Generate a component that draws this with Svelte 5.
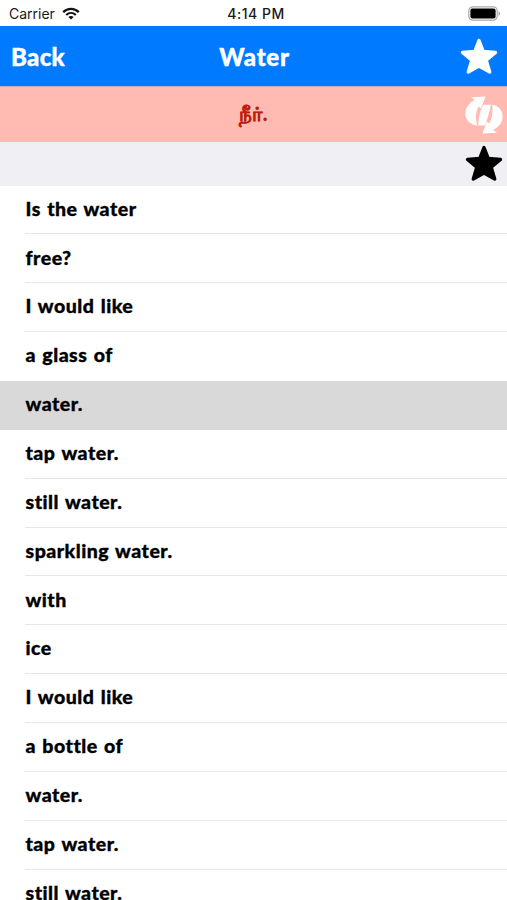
<script lang="ts">
  const phrases: string[] = [
    'Is the water',
    'free?',
    'I would like',
    'a glass of',
    'water.',
    'tap water.',
    'still water.',
    'sparkling water.',
    'with',
    'ice',
    'I would like',
    'a bottle of',
    'water.',
    'tap water.',
    'still water.',
  ];

  let selected = $state(4);
</script>

{#snippet star()}
  <svg class="star" viewBox="0 0 38 37" aria-hidden="true">
    <path
      d="M19 2.5 L23.2 13.4 L35.5 14.5 L26.2 22.2 L29.7 34 L19 28.1 L8.3 34 L11.8 22.2 L2.5 14.5 L14.8 13.4Z"
      fill="currentColor"
      stroke="currentColor"
      stroke-width="3.4"
      stroke-linejoin="round"
    />
  </svg>
{/snippet}

<div class="screen">
  <div class="status">
    <div class="carrier">
      <span>Carrier</span>
      <svg class="wifi" viewBox="0 0 18 13" fill="none" stroke="#111" stroke-width="2.2">
        <path d="M1.2 5.1 C5.6 0.7 12.4 0.7 16.8 5.1" />
        <path d="M4.2 8 C7 5.3 11 5.3 13.8 8" />
        <path d="M9 12.6 L6.4 10 C7.9 8.6 10.1 8.6 11.6 10Z" fill="#111" stroke="none" />
      </svg>
    </div>
    <span class="time">4:14 PM</span>
    <svg class="battery" viewBox="0 0 33 15">
      <rect x="0.8" y="0.8" width="28.4" height="13.4" rx="4" fill="#fff" stroke="#a9a9a9" stroke-width="1.2" />
      <rect x="2.4" y="2.4" width="25.2" height="10.2" rx="2" fill="#000" />
      <path d="M30.6 5.2 C32.4 6 32.4 9 30.6 9.8Z" fill="#8c8c8c" />
    </svg>
  </div>

  <header class="navbar">
    <button class="back">Back</button>
    <h1>Water</h1>
    <button class="nav-star" aria-label="Favourites">{@render star()}</button>
  </header>

  <div class="translation">
    <span lang="ta">நீர்.</span>
    <button class="swap" aria-label="Swap">
      <svg viewBox="0 0 38 38" fill="#fff">
        <!-- left arrow, pointing up -->
        <path d="M6 1.2 L20.6 0.4 L16 12.6 L13.8 10.4 C10.8 15.4 10 22 12.4 29.4 C5.2 28.6 0.4 24 0.4 17.4 C0.4 11.4 4.4 6.6 9.8 4Z" />
        <!-- slanted bar between the two halves -->
        <path d="M18.2 8.8 L26 8.8 C24.8 14.6 22.6 22.4 20.2 29.6 L13.4 29.6 C13.2 23 14.4 16 18.2 8.8Z" />
        <!-- right arrow, pointing down -->
        <path d="M32 36.8 L17.4 37.6 L22 25.4 L24.2 27.6 C27.2 22.6 28 16 27.2 8.8 C33.4 9.8 37.6 14 37.6 20.6 C37.6 26.6 33.6 31.4 28.2 34Z" />
      </svg>
    </button>
  </div>

  <div class="section">{@render star()}</div>

  <ul>
    {#each phrases as phrase, i}
      <li class:selected={i === selected} class:before={i + 1 === selected}>
        <button onclick={() => (selected = i)}>{phrase}</button>
      </li>
    {/each}
  </ul>
</div>

<style>
  :global(body) {
    background: #fff;
  }

  .screen {
    height: 900px;
    overflow: hidden;
    display: flex;
    flex-direction: column;
    font-family: Lato, 'Open Sans', sans-serif;
    font-weight: 900;
    color: #000;
  }

  button {
    margin: 0;
    padding: 0;
    border: 0;
    background: none;
    color: inherit;
    font: inherit;
    letter-spacing: inherit;
  }

  svg {
    display: block;
  }

  .status {
    flex: none;
    height: 26px;
    box-sizing: border-box;
    padding: 1px 6px 0 9px;
    display: grid;
    grid-template-columns: 1fr auto 1fr;
    align-items: center;
    font-family: Inter, sans-serif;
    font-size: 14px;
    font-weight: 400;
    color: #1a1a1a;
  }

  .carrier {
    display: flex;
    align-items: center;
    gap: 7px;
  }

  .wifi {
    width: 18px;
    height: 13px;
  }

  .time {
    padding-left: 2px;
    font-weight: 500;
    letter-spacing: 0.5px;
  }

  .battery {
    justify-self: end;
    width: 33px;
    height: 15px;
  }

  .navbar {
    flex: none;
    height: 60px;
    display: grid;
    grid-template-columns: 1fr auto 1fr;
    align-items: center;
    padding: 0 9px 0 11px;
    background: #007aff;
    color: #fff;
    font-size: 24px;
    letter-spacing: 0.3px;
    -webkit-text-stroke: 0.4px currentColor;
  }

  .back {
    justify-self: start;
  }

  h1 {
    margin: 0;
    font-size: 24px;
    font-weight: 900;
    letter-spacing: 0.7px;
  }

  .nav-star {
    justify-self: end;
  }

  .star {
    width: 38px;
    height: 37px;
  }

  .translation {
    flex: none;
    height: 56px;
    box-sizing: border-box;
    border-top: 1px solid #c7a9bb;
    padding: 0 4px;
    display: grid;
    grid-template-columns: 1fr auto 1fr;
    align-items: center;
    background: #ffbbb1;
    color: #bd1e0b;
    font-size: 20px;
  }

  .translation span {
    grid-column: 2;
    letter-spacing: 0.5px;
    -webkit-text-stroke: 0.2px currentColor;
  }

  .swap {
    justify-self: end;
    width: 38px;
    height: 38px;
  }

  .section {
    flex: none;
    height: 43.5px;
    padding-right: 4px;
    display: flex;
    align-items: center;
    justify-content: flex-end;
    background: #efeff4;
  }

  ul {
    margin: 0;
    padding: 0;
    list-style: none;
  }

  li {
    height: 48.87px;
    padding-left: 25px;
  }

  li button {
    width: 100%;
    height: 100%;
    padding: 0 0 1.5px 0.5px;
    border-bottom: 1px solid #e7e7e9;
    text-align: left;
    font-size: 19.5px;
    line-height: 46px;
    letter-spacing: 0.5px;
    word-spacing: 1.2px;
    -webkit-text-stroke: 0.35px currentColor;
  }

  li.selected {
    background: #d9d9d9;
  }

  li.selected button,
  li.before button {
    border-color: transparent;
  }
</style>
